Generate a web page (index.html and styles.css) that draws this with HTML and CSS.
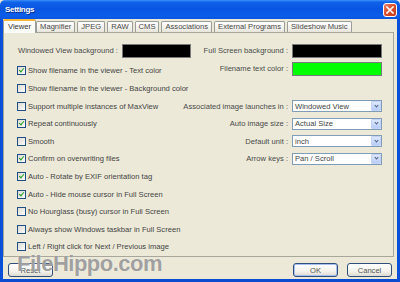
FILE: index.html
```html
<!DOCTYPE html>
<html>
<head>
<meta charset="utf-8">
<link rel="stylesheet" href="styles.css">
</head>
<body>
<div class="window">
  <div class="titlebar">
    <span class="title">Settings</span>
    <span class="close"><svg width="8" height="8" viewBox="0 0 8 8"><path d="M1 1L7 7M7 1L1 7" stroke="#fff" stroke-width="1.6" stroke-linecap="square"/></svg></span>
  </div>
  <div class="frame">
    <div class="tabs">
      <span class="tab active">Viewer</span>
      <span class="tab">Magnifier</span>
      <span class="tab">JPEG</span>
      <span class="tab">RAW</span>
      <span class="tab">CMS</span>
      <span class="tab">Associations</span>
      <span class="tab">External Programs</span>
      <span class="tab">Slideshow Music</span>
    </div>
    <div class="panel">
      <div class="grid">
        <div class="cell first"><span class="lbl">Windowed View background :</span><span class="swatch black small"></span></div>
        <div class="rcell first"><span class="lbl">Full Screen background :</span><span class="swatch black"></span></div>

        <div class="check"><span class="box on"></span>Show filename in the viewer - Text color</div>
        <div class="rcell first"><span class="lbl">Filename text color :</span><span class="swatch lime"></span></div>

        <div class="check"><span class="box"></span>Show filename in the viewer - Background color</div>
        <div class="rcell"></div>

        <div class="check"><span class="box"></span>Support multiple instances of MaxView</div>
        <div class="rcell"><span class="lbl">Associated image launches in :</span><span class="combo"><span class="val">Windowed View</span><span class="arrow"></span></span></div>

        <div class="check"><span class="box on"></span>Repeat continuously</div>
        <div class="rcell"><span class="lbl">Auto image size :</span><span class="combo"><span class="val">Actual Size</span><span class="arrow"></span></span></div>

        <div class="check"><span class="box"></span>Smooth</div>
        <div class="rcell"><span class="lbl">Default unit :</span><span class="combo"><span class="val">inch</span><span class="arrow"></span></span></div>

        <div class="check"><span class="box on"></span>Confirm on overwriting files</div>
        <div class="rcell"><span class="lbl">Arrow keys :</span><span class="combo"><span class="val">Pan / Scroll</span><span class="arrow"></span></span></div>

        <div class="check wide"><span class="box on"></span>Auto - Rotate by EXIF orientation tag</div>
        <div class="check wide"><span class="box on"></span>Auto - Hide mouse cursor in Full Screen</div>
        <div class="check wide"><span class="box"></span>No Hourglass (busy) cursor in Full Screen</div>
        <div class="check wide"><span class="box"></span>Always show Windows taskbar in Full Screen</div>
        <div class="check wide"><span class="box"></span>Left / Right click for Next / Previous image</div>
      </div>
    </div>
    <div class="footer">
      <span class="btn">Reset</span>
      <span class="right-btns"><span class="btn default">OK</span><span class="btn">Cancel</span></span>
    </div>
  </div>
  <div class="watermark">FileHippo.com</div>
</div>
</body>
</html>
```
FILE: styles.css
```css
* { box-sizing: border-box; }
html, body { margin: 0; padding: 0; background: #fff; }
body {
  font-family: "Liberation Sans", Arial, sans-serif;
  font-size: 7.6px;
  color: #444;
}
.window {
  position: relative;
  width: 400px;
  height: 282px;
  background: #ece9d8;
  display: flex;
  flex-direction: column;
  overflow: hidden;
}
.titlebar {
  height: 19px;
  flex: none;
  display: flex;
  align-items: center;
  justify-content: space-between;
  padding: 0 3px 0 5px;
  background: linear-gradient(to bottom, #3b8ff8 0%, #0f62e8 12%, #0855e2 45%, #0b5de9 85%, #0a55dc 100%);
  border-radius: 5px 5px 0 0;
}
.title {
  color: #fff;
  font-weight: bold;
  font-size: 8px;
  letter-spacing: -0.3px;
  text-shadow: 1px 1px 0 #0a2f8a;
}
.close {
  width: 14px;
  height: 14px;
  border: 1px solid #fff;
  border-radius: 3px;
  background: linear-gradient(135deg, #e9826a 0%, #dc4f2a 45%, #c83c1a 100%);
  display: flex;
  align-items: center;
  justify-content: center;
}
.close svg { display: block; }
.frame {
  flex: 1;
  display: flex;
  flex-direction: column;
  border-left: 3px solid #0a50d8;
  border-right: 3px solid #0a50d8;
  border-bottom: 3px solid #0a4bd0;
}
.tabs {
  height: 13px;
  flex: none;
  display: flex;
  align-items: flex-end;
  position: relative;
  z-index: 2;
}
.tab {
  height: 11px;
  line-height: 10px;
  padding: 0 3px;
  margin-right: 2px;
  border: 1px solid #9a9d98;
  border-bottom: none;
  border-radius: 2px 2px 0 0;
  background: linear-gradient(to bottom, #ffffff, #f0efe8 70%, #e6e4da);
  color: #4a4a4a;
  white-space: nowrap;
}
.tab.active {
  height: 14px;
  line-height: 12px;
  margin-bottom: -1px;
  padding: 0 4px;
  margin-right: 0;
  background: #fbfbf8;
  border-top: 2px solid #f4b63c;
  color: #333;
}
.panel {
  height: 225px;
  flex: none;
  margin-right: 3px;
  border: 1px solid #a8a79c;
  padding: 11px 11px 0 13px;
}
.grid {
  display: grid;
  grid-template-columns: 160px 1fr;
  grid-template-rows: 18.2px repeat(11, 17.6px);
}
.cell, .rcell, .check {
  display: flex;
  align-items: center;
  white-space: nowrap;
}
.lbl { color: #4a4a4a; }
.cell.first, .rcell.first { align-items: flex-start; line-height: 14px; }
.cell.first { padding-left: 1px; gap: 4px; }
.rcell { justify-content: flex-end; gap: 4px; }
.check.wide { grid-column: 1 / 3; }
.swatch {
  display: block;
  flex: none;
  width: 90px;
  height: 14px;
  border: 1px solid #7a7a7a;
}
.swatch.small { width: 69px; }
.black { background: #000; }
.lime { background: #00ff00; }
.box {
  width: 9px;
  height: 9px;
  margin-right: 2px;
  border: 1px solid #1f4f86;
  background: linear-gradient(135deg, #dcdbd3, #fbfbf9);
  position: relative;
  flex: none;
}
.box.on::after {
  content: "";
  position: absolute;
  left: 2px;
  top: 0px;
  width: 2px;
  height: 4px;
  border: solid #21a121;
  border-width: 0 1.5px 1.5px 0;
  transform: rotate(40deg);
}
.combo {
  flex: none;
  width: 90px;
  height: 12px;
  border: 1px solid #7f9db9;
  background: #fff;
  display: flex;
  align-items: center;
  justify-content: space-between;
}
.combo .val { padding-left: 2px; color: #444; }
.arrow {
  width: 10px;
  height: 10px;
  background: linear-gradient(to bottom, #dfe8fd, #b8cdf8);
  border: 1px solid #c3d3f5;
  border-radius: 1px;
  position: relative;
}
.arrow::after {
  content: "";
  position: absolute;
  left: 2.5px;
  top: 1.5px;
  width: 2px;
  height: 2px;
  border: solid #4d6185;
  border-width: 0 1.3px 1.3px 0;
  transform: rotate(45deg);
}
.footer {
  flex: 1;
  display: flex;
  justify-content: space-between;
  align-items: flex-start;
  padding: 6px 5px 0 5px;
}
.right-btns { display: flex; gap: 9px; }
.btn {
  width: 45px;
  height: 14px;
  border: 1px solid #2f4f7a;
  border-radius: 3px;
  background: linear-gradient(to bottom, #ffffff, #f3f2ec 60%, #dedbd0);
  display: flex;
  align-items: center;
  justify-content: center;
  color: #555;
}
.btn.default { box-shadow: inset 0 0 0 1px #a6c0f0; }
.watermark {
  position: absolute;
  left: 17px;
  top: 253px;
  font-family: "Liberation Sans", Arial, sans-serif;
  font-size: 22px;
  font-weight: bold;
  line-height: 1;
  letter-spacing: -0.5px;
  color: rgba(135, 135, 135, 0.8);
  text-shadow: 0 0 1px rgba(255, 255, 255, 0.9);
  white-space: nowrap;
  z-index: 5;
}
```
